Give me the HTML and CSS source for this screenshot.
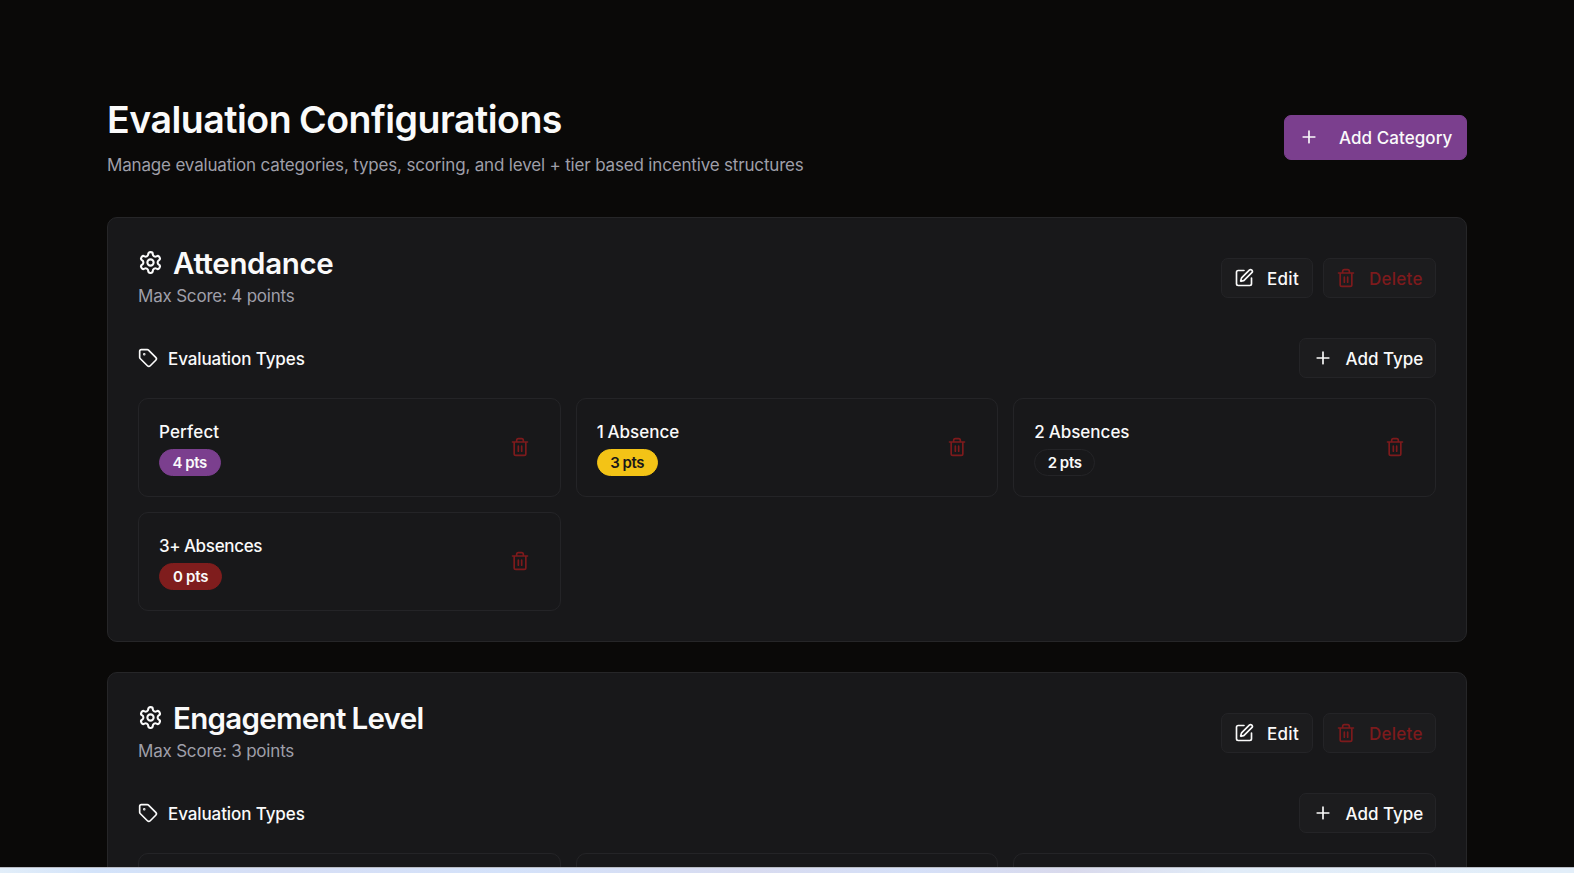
FILE: index.html
```html
<!DOCTYPE html>
<html lang="en">
<head>
<meta charset="utf-8">
<title>Evaluation Configurations</title>
<link rel="stylesheet" href="styles.css">
</head>
<body>
<svg class="sprite" aria-hidden="true">
  <symbol id="plus" viewBox="0 0 24 24"><path d="M5 12h14M12 5v14"/></symbol>
  <symbol id="gear" viewBox="0 0 24 24"><path d="M12.22 2h-.44a2 2 0 0 0-2 2v.18a2 2 0 0 1-1 1.73l-.43.25a2 2 0 0 1-2 0l-.15-.08a2 2 0 0 0-2.73.73l-.22.38a2 2 0 0 0 .73 2.73l.15.1a2 2 0 0 1 1 1.72v.51a2 2 0 0 1-1 1.74l-.15.09a2 2 0 0 0-.73 2.73l.22.38a2 2 0 0 0 2.73.73l.15-.08a2 2 0 0 1 2 0l.43.25a2 2 0 0 1 1 1.73V20a2 2 0 0 0 2 2h.44a2 2 0 0 0 2-2v-.18a2 2 0 0 1 1-1.73l.43-.25a2 2 0 0 1 2 0l.15.08a2 2 0 0 0 2.73-.73l.22-.39a2 2 0 0 0-.73-2.73l-.15-.08a2 2 0 0 1-1-1.74v-.5a2 2 0 0 1 1-1.74l.15-.09a2 2 0 0 0 .73-2.73l-.22-.38a2 2 0 0 0-2.73-.73l-.15.08a2 2 0 0 1-2 0l-.43-.25a2 2 0 0 1-1-1.73V4a2 2 0 0 0-2-2z"/><circle cx="12" cy="12" r="3"/></symbol>
  <symbol id="edit" viewBox="0 0 24 24"><path d="M12 3H5a2 2 0 0 0-2 2v14a2 2 0 0 0 2 2h14a2 2 0 0 0 2-2v-7"/><path d="M18.375 2.625a1 1 0 0 1 3 3l-9.013 9.014a2 2 0 0 1-.853.505l-2.873.84a.5.5 0 0 1-.62-.62l.84-2.873a2 2 0 0 1 .506-.852z"/></symbol>
  <symbol id="trash" viewBox="0 0 24 24"><path d="M3 6h18M19 6v14c0 1-1 2-2 2H7c-1 0-2-1-2-2V6M8 6V4c0-1 1-2 2-2h4c1 0 2 1 2 2v2M10 11v6M14 11v6"/></symbol>
  <symbol id="tag" viewBox="0 0 24 24"><path d="M12.586 2.586A2 2 0 0 0 11.172 2H4a2 2 0 0 0-2 2v7.172a2 2 0 0 0 .586 1.414l8.704 8.704a2.426 2.426 0 0 0 3.42 0l6.58-6.58a2.426 2.426 0 0 0 0-3.42z"/><circle cx="7.5" cy="7.5" r=".5" fill="currentColor"/></symbol>
</svg>
<main class="page">
  <header class="page-header">
    <div>
      <h1 class="title">Evaluation Configurations</h1>
      <p class="subtitle">Manage evaluation categories, types, scoring, and level + tier based incentive structures</p>
    </div>
    <button class="btn btn-primary"><svg class="icon"><use href="#plus"/></svg><span>Add Category</span></button>
  </header>

  <section class="card">
    <div class="card-header">
      <div>
        <h2 class="card-title"><svg class="icon icon-lg"><use href="#gear"/></svg><span class="heading">Attendance</span></h2>
        <p class="score">Max Score: 4 points</p>
      </div>
      <div class="actions">
        <button class="btn btn-edit"><svg class="icon"><use href="#edit"/></svg><span>Edit</span></button>
        <button class="btn btn-danger"><svg class="icon"><use href="#trash"/></svg><span>Delete</span></button>
      </div>
    </div>
    <div class="types-header">
      <h3 class="types-title"><svg class="icon"><use href="#tag"/></svg><span>Evaluation Types</span></h3>
      <button class="btn btn-type"><svg class="icon"><use href="#plus"/></svg><span>Add Type</span></button>
    </div>
    <div class="grid">
      <article class="item"><div><p class="name name-word">Perfect</p><span class="badge badge-purple">4 pts</span></div><svg class="icon trash"><use href="#trash"/></svg></article>
      <article class="item"><div><p class="name">1 Absence</p><span class="badge badge-yellow">3 pts</span></div><svg class="icon trash"><use href="#trash"/></svg></article>
      <article class="item"><div><p class="name">2 Absences</p><span class="badge">2 pts</span></div><svg class="icon trash"><use href="#trash"/></svg></article>
      <article class="item"><div><p class="name name-plus">3+ Absences</p><span class="badge badge-red">0 pts</span></div><svg class="icon trash"><use href="#trash"/></svg></article>
    </div>
  </section>

  <section class="card">
    <div class="card-header">
      <div>
        <h2 class="card-title"><svg class="icon icon-lg"><use href="#gear"/></svg><span class="heading heading-long">Engagement Level</span></h2>
        <p class="score">Max Score: 3 points</p>
      </div>
      <div class="actions">
        <button class="btn btn-edit"><svg class="icon"><use href="#edit"/></svg><span>Edit</span></button>
        <button class="btn btn-danger"><svg class="icon"><use href="#trash"/></svg><span>Delete</span></button>
      </div>
    </div>
    <div class="types-header">
      <h3 class="types-title"><svg class="icon"><use href="#tag"/></svg><span>Evaluation Types</span></h3>
      <button class="btn btn-type"><svg class="icon"><use href="#plus"/></svg><span>Add Type</span></button>
    </div>
    <div class="grid">
      <article class="item"></article>
      <article class="item"></article>
      <article class="item"></article>
    </div>
  </section>
</main>
<div class="taskbar"></div>
</body>
</html>
```
FILE: styles.css
```css
* { box-sizing: border-box; margin: 0; padding: 0; }
body {
  height: 873px;
  overflow: hidden;
  display: flex;
  flex-direction: column;
  background: #0a0908;
  color: #fafafa;
  font-family: Inter, "Liberation Sans", sans-serif;
  font-size: 17px;
}
.sprite { position: absolute; width: 0; height: 0; }
.page { flex: 1; min-height: 0; overflow: hidden; padding: 97px 107px 0; }
.page-header { display: flex; justify-content: space-between; align-items: center; height: 80px; margin-bottom: 40px; }
.title { font-size: 37.5px; line-height: 45px; font-weight: 600; letter-spacing: -0.5px; word-spacing: -1px; white-space: nowrap; }
.subtitle { margin-top: 11px; line-height: 25px; color: #9f9fa9; letter-spacing: -0.17px; white-space: nowrap; }

.icon { width: 20px; height: 20px; flex: none; fill: none; stroke: currentColor; stroke-width: 2; stroke-linecap: round; stroke-linejoin: round; }
.icon-lg { width: 25px; height: 25px; }
.btn {
  display: flex; align-items: center; gap: 12px;
  height: 40px; padding: 0 12px;
  border: 1px solid #242427; border-radius: 7px;
  background: #1c1c1e; color: #fafafa;
  font: 500 17px Inter, "Liberation Sans", sans-serif;
  white-space: nowrap;
}
.btn span { padding-top: 2px; }
.btn-primary { width: 183px; height: 45px; gap: 20px; padding: 0 14px; border-color: #7b3f8e; background: #7b3f8e; letter-spacing: 0.07px; }
.btn-edit { width: 92px; gap: 13px; letter-spacing: 0.3px; }
.btn-danger { width: 113px; gap: 13px; color: #7d1a1c; letter-spacing: 0.25px; }
.btn-type { width: 137px; gap: 12.5px; padding-left: 13px; }

.card { padding: 30px; border: 1px solid #262628; border-radius: 10px; background: #18181a; margin-bottom: 30px; }
.card-header { display: flex; justify-content: space-between; align-items: center; height: 60px; }
.card-title { display: flex; align-items: center; gap: 10px; height: 30px; font-size: 29.5px; line-height: 30px; font-weight: 600; white-space: nowrap; }
.heading { letter-spacing: -0.35px; }
.heading-long { letter-spacing: -0.7px; word-spacing: -1px; }
.score { padding-top: 1px; margin-top: 5px; line-height: 25px; color: #9f9fa9; letter-spacing: -0.2px; }
.actions { display: flex; gap: 10px; }
.types-header { display: flex; justify-content: space-between; align-items: center; height: 40px; margin: 30px 0 20px; }
.types-title { display: flex; align-items: center; gap: 10px; font-size: 17px; font-weight: 500; letter-spacing: -0.1px; }
.types-title span { padding-top: 2px; }
.grid { display: grid; grid-template-columns: repeat(3, 1fr); gap: 15px; }
.item { display: flex; justify-content: space-between; align-items: center; height: 99px; padding: 0 30px 0 20px; border: 1px solid #242427; border-radius: 10px; }
.name { padding-top: 1px; height: 25px; line-height: 25px; font-weight: 500; letter-spacing: 0; word-spacing: -0.7px; margin-bottom: 5px; }
.name-word { letter-spacing: 0.15px; }
.name-plus { letter-spacing: -0.32px; }
.badge { display: block; width: fit-content; padding: 0 12.5px; border: 1px solid #242427; border-radius: 14px; font-size: 15px; font-weight: 600; line-height: 25px; letter-spacing: -0.3px; word-spacing: -0.5px; }
.badge-purple { padding: 0 13px 0 12.5px; background: #7b3f8e; border-color: #7b3f8e; }
.badge-yellow { background: #f3c316; border-color: #f3c316; color: #18181a; }
.badge-red { padding: 0 13px; letter-spacing: -0.1px; background: #7f1d1d; border-color: #7f1d1d; }
.trash { margin-bottom: 1px; color: #7d1a1c; }
.taskbar { height: 6px; flex: none; border-top: 1px solid #b9bcc4; background: linear-gradient(90deg, #e2eef9 0, #d3e3fa 6%, #d6def5 18%, #d4e2fa 32%, #d8dbf0 48%, #d5e0f8 58%, #d9d9ec 68%, #e1ecf8 78%, #e2eef9 100%); }
```
